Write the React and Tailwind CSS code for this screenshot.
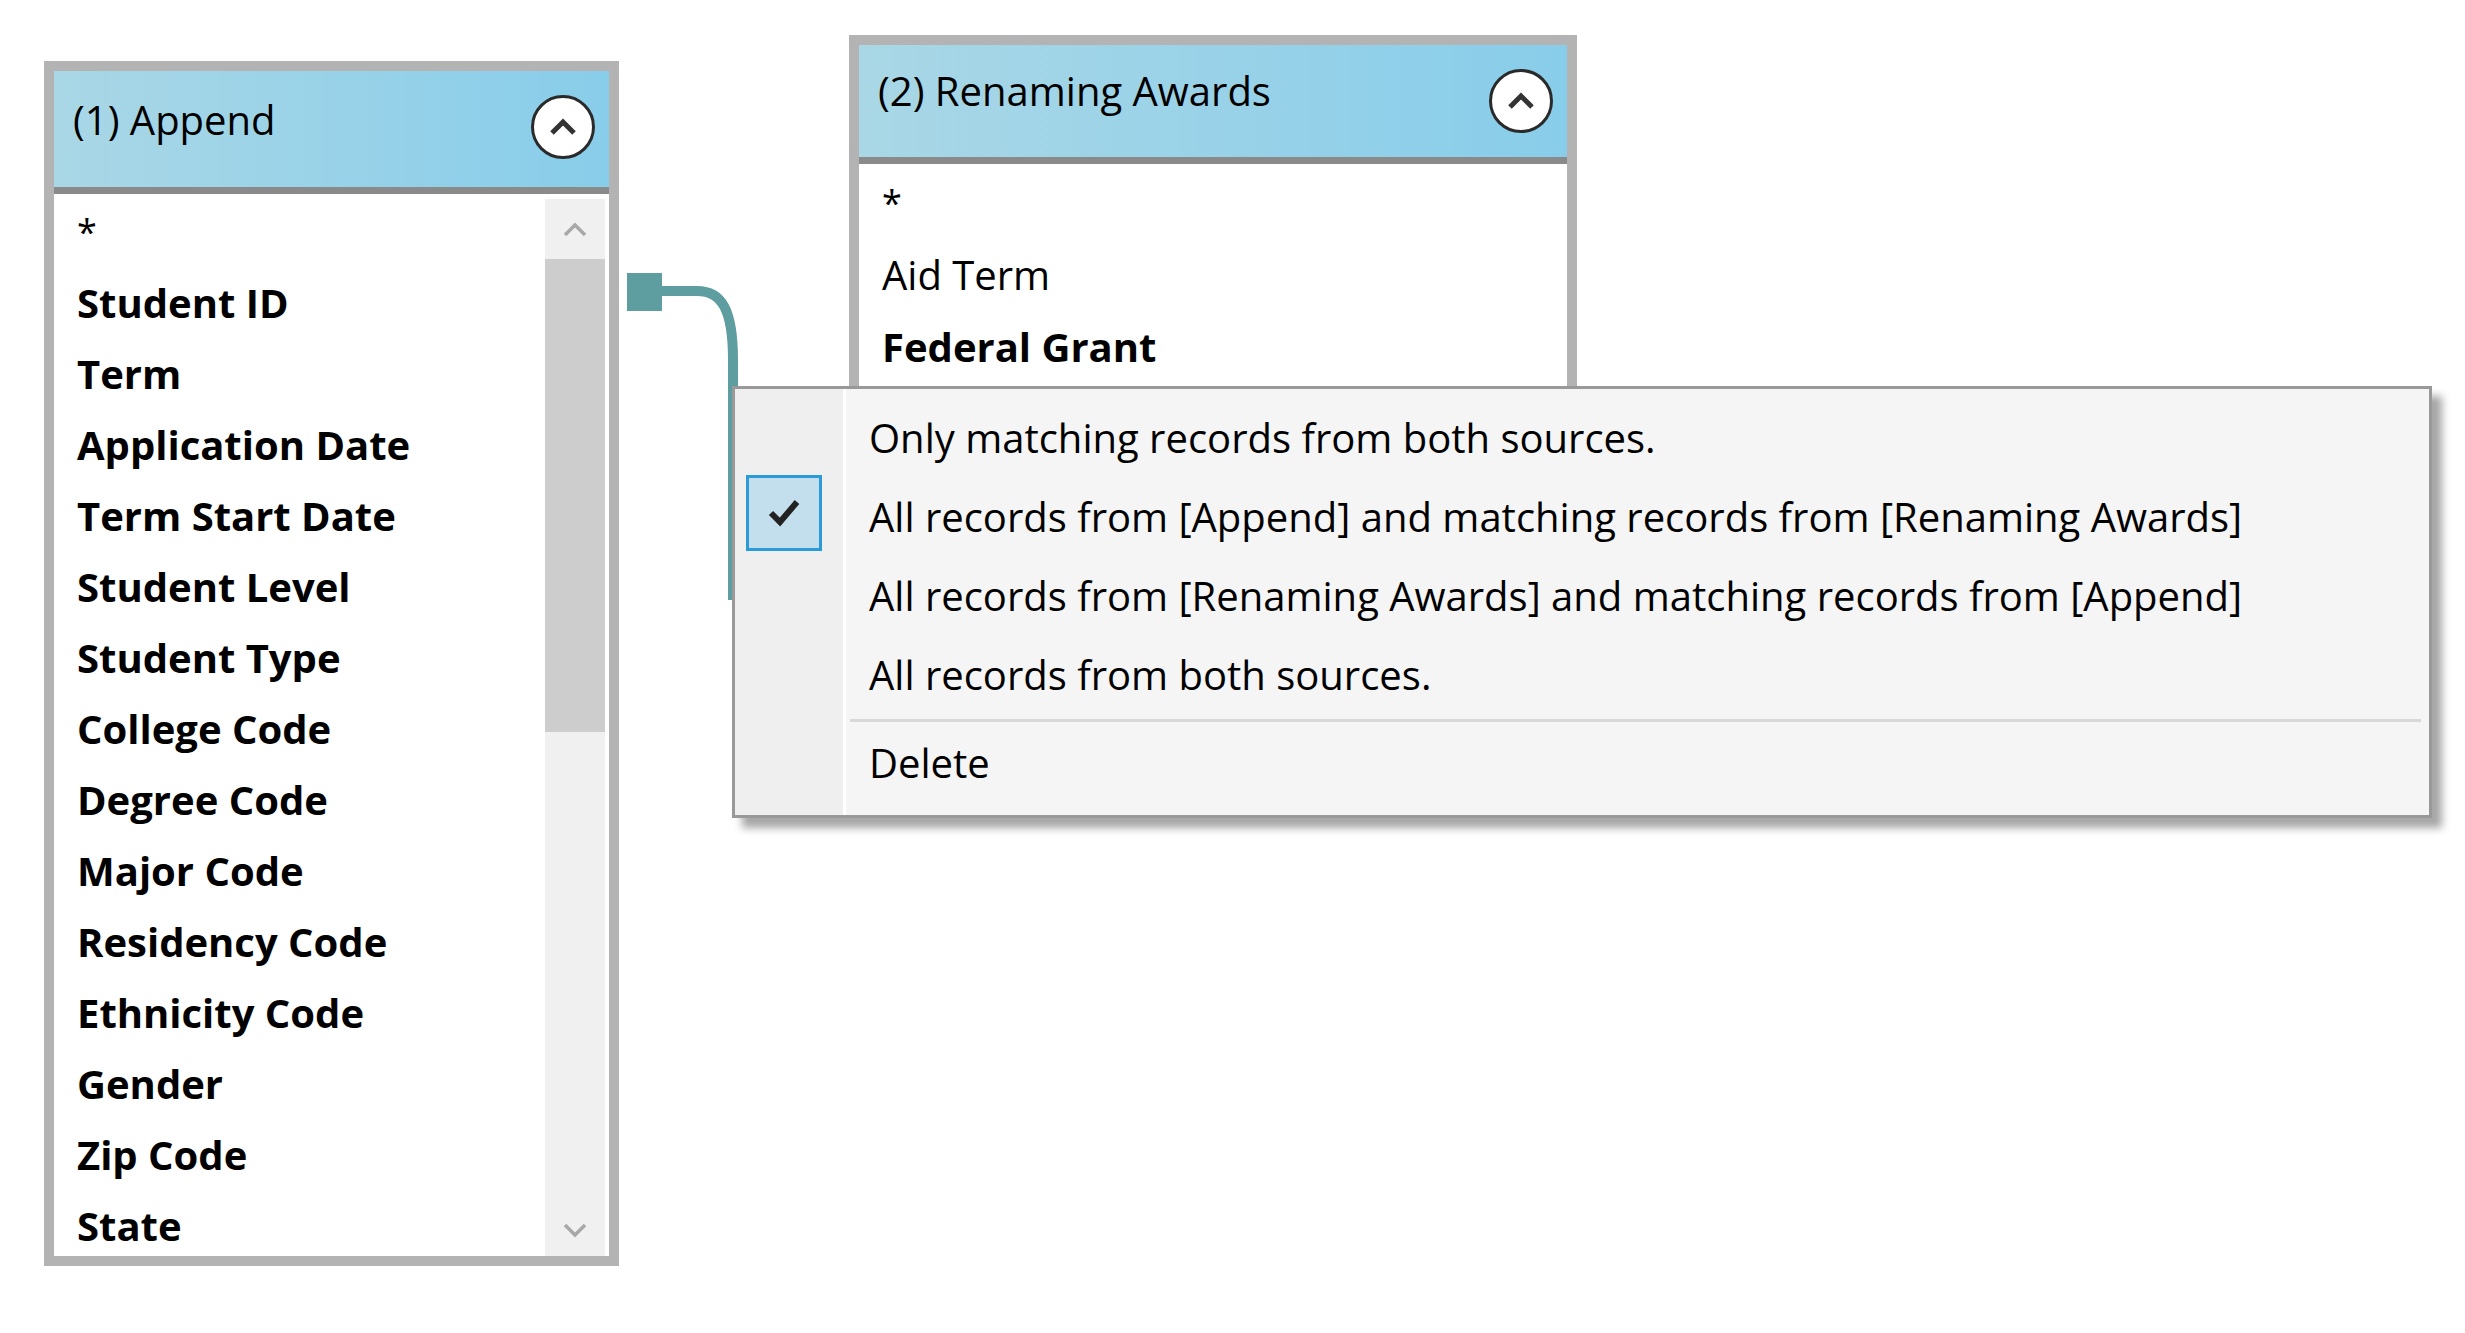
import React from "react";

const font = { fontFamily: '"Open Sans", "Noto Sans", sans-serif' };

function Chevron() {
  return (
    <div className="w-[64px] h-[64px] rounded-full border-[3px] border-[#2a2a2a] bg-white flex items-center justify-center">
      <svg width="30" height="20" viewBox="0 0 30 20">
        <path d="M4 16 L15 5 L26 16" fill="none" stroke="#333" strokeWidth="5" strokeLinejoin="miter" />
      </svg>
    </div>
  );
}

const fields1 = ["Student ID","Term","Application Date","Term Start Date","Student Level","Student Type","College Code","Degree Code","Major Code","Residency Code","Ethnicity Code","Gender","Zip Code","State"];

export default function App() {
  return (
    <div className="relative w-[2465px] h-[1333px] bg-white overflow-hidden text-black" style={font}>
      {/* Panel 1 */}
      <div className="absolute left-[44px] top-[61px] w-[575px] h-[1205px] border-[10px] border-[#b3b3b3] bg-white flex flex-col">
        <div className="h-[112px] shrink-0 bg-gradient-to-r from-[#a9d7e6] to-[#88cdea] flex items-center justify-between pl-[19px] pr-[14px] pb-[4px] border-b-[7px] border-[#8a8a8a] box-content">
          <span className="text-[40px] -mt-[14px]">(1) Append</span>
          <Chevron />
        </div>
        <div className="flex-1 flex min-h-0">
          <div className="flex-1 pt-[2px] pl-[23px] overflow-hidden">
            <div className="h-[71px] leading-[71px] text-[36px]">*</div>
            {fields1.map((f) => (
              <div key={f} className="h-[71px] leading-[71px] text-[40px] font-bold whitespace-nowrap">{f}</div>
            ))}
          </div>
          <div className="w-[60px] mr-[4px] mt-[5px] bg-[#f0f0f0] flex flex-col">
            <div className="h-[60px] flex items-center justify-center">
              <svg width="24" height="16" viewBox="0 0 24 16"><path d="M2 14 L12 4 L22 14" fill="none" stroke="#a8a8a8" strokeWidth="3.5" /></svg>
            </div>
            <div className="h-[473px] bg-[#cdcdcd]" />
            <div className="flex-1" />
            <div className="h-[50px] flex items-center justify-center">
              <svg width="24" height="16" viewBox="0 0 24 16"><path d="M2 2 L12 12 L22 2" fill="none" stroke="#a8a8a8" strokeWidth="3.5" /></svg>
            </div>
          </div>
        </div>
      </div>

      {/* Panel 2 */}
      <div className="absolute left-[849px] top-[35px] w-[728px] h-[500px] border-[10px] border-[#b3b3b3] bg-white flex flex-col">
        <div className="h-[119px] shrink-0 bg-gradient-to-r from-[#a9d7e6] to-[#88cdea] flex items-center justify-between pl-[19px] pr-[14px] border-b-[7px] border-[#8a8a8a]">
          <span className="text-[40px] -mt-[20px]">(2) Renaming Awards</span>
          <Chevron />
        </div>
        <div className="pt-[3px] pl-[23px]">
          <div className="h-[72px] leading-[72px] text-[36px]">*</div>
          <div className="h-[72px] leading-[72px] text-[40px]">Aid Term</div>
          <div className="h-[72px] leading-[72px] text-[40px] font-bold">Federal Grant</div>
        </div>
      </div>

      {/* Connector */}
      <svg className="absolute left-0 top-0" width="2465" height="1333">
        <rect x="627" y="273" width="35" height="38" fill="#5f9ea0" />
        <path d="M660 291 L697 291 C722 291 733 310 733 360 L733 600" fill="none" stroke="#5f9ea0" strokeWidth="10" />
      </svg>

      {/* Context menu */}
      <div className="absolute left-[732px] top-[386px] w-[1700px] h-[432px] border-[3px] border-[#999] bg-[#f5f5f5] shadow-[10px_10px_8px_rgba(0,0,0,0.35)] flex text-[40px]">
        <div className="w-[111px] bg-[#efefef] border-r-[3px] border-white flex flex-col pt-[86px] pl-[11px]">
          <div className="w-[76px] h-[76px] border-[3px] border-[#2b9ad8] bg-[#c3dfee] flex items-center justify-center">
            <svg width="34" height="30" viewBox="0 0 34 30"><path d="M4 15 L13 24 L30 4" fill="none" stroke="#222" strokeWidth="6" /></svg>
          </div>
        </div>
        <div className="flex-1 flex flex-col pt-[9px] pr-[8px]">
          <div className="h-[79px] flex items-center pl-[23px]">Only matching records from both sources.</div>
          <div className="h-[79px] flex items-center pl-[23px]">All records from [Append] and matching records from [Renaming Awards]</div>
          <div className="h-[79px] flex items-center pl-[23px]">All records from [Renaming Awards] and matching records from [Append]</div>
          <div className="h-[79px] flex items-center pl-[23px]">All records from both sources.</div>
          <div className="h-[3px] bg-[#d8d8d8] mt-[5px] ml-[4px]" />
          <div className="h-[81px] flex items-center pl-[23px]">Delete</div>
        </div>
      </div>
    </div>
  );
}
